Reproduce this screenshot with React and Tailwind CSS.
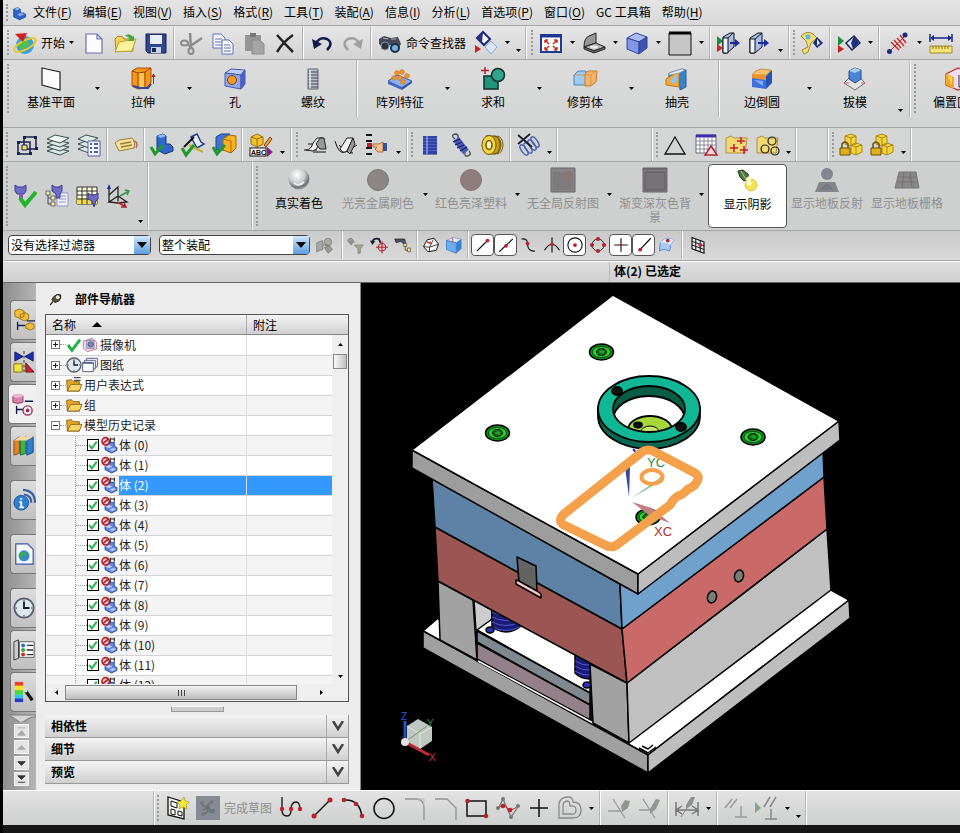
import { useState } from 'react';
import clsx from 'clsx';

const ICONS = {
  part: <><path d="M4 6l6-2 4 2v6l5 0 3 2v4l-9 4-9-4z" fill="#2f62c8" stroke="#123a86" /><path d="M4 6l6-2 4 2-5 2z" fill="#8db7f5" /><path d="M9 14l6-2 6 2-8 3z" fill="#7fa9ee" /></>,
  globe: <><circle cx="12" cy="14" r="9" fill="#3a9fdc" /><path d="M5 13q3-5 8-4 5 1 3 5-4 1-5 5-5 0-6-6z" fill="#4fc04a" /><ellipse cx="12" cy="14" rx="12" ry="4.500" fill="none" stroke="#e8c82a" strokeWidth="2" transform="rotate(-28 12 14)" /><path d="M2 3l12-1-4 9z" fill="#d42020" /></>,
  doc: <path d="M4 3h11l5 5v14H4zM15 3v5h5" fill="#fdfdff" stroke="#6b6fae" strokeWidth="1.200" />,
  open: <><path d="M2 8l3-3 5 1 1 2h9v12H3z" fill="#f2d257" stroke="#a8892a" /><path d="M2 21L6 11l17-3-4 12z" fill="#fdf19a" stroke="#b89a34" /><path d="M12 5q4-4 8 1l1-2v6h-6l2-2q-2-3-5-3z" fill="#3fa83a" /></>,
  save: <><path d="M2 3h20v19H4l-2-2z" fill="#2f4690" stroke="#151f50" /><path d="M6 4h12v9H6z" fill="#e9effa" /><path d="M7 16h10v6H7z" fill="#c9d2e4" /><path d="M8 17h4v4H8z" fill="#1b2450" /></>,
  cut: <g fill="none" stroke="#8c8c8c" strokeWidth="2"><path d="M10 2l1 15M9 16L22 7" strokeWidth="2.500" /><ellipse cx="4.500" cy="12" rx="3.500" ry="2.500" /><ellipse cx="11" cy="20" rx="2.500" ry="3" /><path d="M7 13l4 3" /></g>,
  copy: <g fill="#fbfcff" stroke="#5b6eb8"><path d="M2 3h8l4 4v10H2z" /><path d="M4 8h7M4 11h7M4 14h7" /><path d="M11 9h7l4 4v10H11z" /><path d="M13 14h6M13 17h7M13 20h7" /></g>,
  paste: <><path d="M3 4h16v16H3z" fill="#969696" /><path d="M8 2h6v4H8z" fill="#777" /><path d="M10 9h8l4 4v10H10z" fill="#a5a5a5" stroke="#8a8a8a" /></>,
  del: <path d="M4 4q7 8 16 17M20 4Q10 11 4 21" fill="none" stroke="#222" strokeWidth="2.500" />,
  undo: <><path d="M5 14Q9 5 17 8q7 4 0 11" fill="none" stroke="#121a4c" strokeWidth="2.500" /><path d="M2 8l2 10 8-5z" fill="#121a4c" /></>,
  redo: <><path d="M19 14Q15 5 7 8q-7 4 0 11" fill="none" stroke="#a0a0a0" strokeWidth="2.500" /><path d="M22 8l-2 10-8-5z" fill="#a0a0a0" /></>,
  binoc: <><path d="M1 8l5-3 7 2 7-1 3 7-3 5-8-4-6 3-5-4z" fill="#444a55" /><circle cx="7" cy="15" r="4" fill="#2c3442" stroke="#8792a6" /><circle cx="17" cy="17" r="4" fill="#6db1e8" stroke="#1f2d46" strokeWidth="2" /><path d="M5 7l5 1M13 8l5 0" stroke="#aab" /></>,
  diamonds: <><path d="M9 1l7 7-6 6-7-7z" fill="#fff" stroke="#1a237e" strokeWidth="2" /><path d="M9 1L3 7l5 5z" fill="#26328c" /><path d="M17 10l6 6-6 7-6-7z" fill="#dbe8fb" stroke="#8aa5d8" /><path d="M1 14l6 4-6 4z" fill="#c22" /></>,
  fit: <><path d="M2 4h20v17H2z" fill="#fff" stroke="#1c3a94" strokeWidth="2" /><path d="M2 5h20" stroke="#1c3a94" strokeWidth="3" /><path d="M6 9h3M6 9v3M18 9h-3M18 9v3M6 19h3M6 19v-3M18 19h-3M18 19v-3M6 9l4 4M18 9l-4 4M6 19l4-4M18 19l-4-4" stroke="#c83018" strokeWidth="1.500" /></>,
  shade: <><path d="M2 16q0-9 5-11l7-3v10z" fill="#979797" stroke="#222" /><path d="M2 16l12-4 9 4-11 4z" fill="#b2b2b2" stroke="#222" /><path d="M2 16v2l10 4 11-4v-2l-11 4z" fill="#777" stroke="#222" /><ellipse cx="12" cy="16" rx="4" ry="1.500" fill="#eee" /></>,
  cube: <><path d="M2 7l9-5 11 4-8 5z" fill="#a8bdf4" stroke="#34439a" /><path d="M2 7l12 4v12L2 18z" fill="#7f97e6" stroke="#34439a" /><path d="M14 11l8-5v11l-8 6z" fill="#3c55b4" stroke="#34439a" /></>,
  square: <><path d="M1 2h22v22H1z" fill="#c6c6c6" stroke="#111" /><path d="M1 2h22" stroke="#000" strokeWidth="3" /></>,
  exit: <><path d="M1 5l6 5-6 5z" fill="#1d8c3a" /><path d="M1 13l6 4-6 4z" fill="#c22" /><path d="M7 6l7-4h4v14l-7 6H7z" fill="#a9bdec" stroke="#111" /><path d="M7 7h5v15H7z" fill="#eef3fe" stroke="#111" /><path d="M12 7l5-5" stroke="#111" /><path d="M14 12h6" stroke="#1a2a9c" strokeWidth="2" /><path d="M19 8l5 4-5 4z" fill="#1a2a9c" /></>,
  door: <><path d="M3 7l8-5h4v14l-7 6H3z" fill="#a9bdec" stroke="#111" /><path d="M3 8h5v14H3z" fill="#eef3fe" stroke="#111" /><path d="M8 8l7-6" stroke="#111" /><path d="M11 12h7" stroke="#1a2a9c" strokeWidth="2" /><path d="M17 8l5 4-5 4z" fill="#1a2a9c" /></>,
  wrench: <><path d="M1 5q6-6 12-2l4 4-6 5-3 9-4 2-2-4 6-3-2-6z" fill="#f4dd74" stroke="#a58a2a" /><circle cx="8" cy="6" r="2.500" fill="#59b7d8" /><path d="M17 6l6 6-6 5-4-5z" fill="#1a2a7c" /><path d="M17 8l3 4-3 3z" fill="#dbe6ff" /></>,
  playview: <><path d="M1 5l6 5-6 5z" fill="#1d8c3a" /><path d="M1 14l6 4-6 4z" fill="#c22" /><path d="M17 5l6 7-8 7-6-7z" fill="#dfe8fb" stroke="#1a2a5c" strokeWidth="1.500" /><path d="M17 5l-3 7 2 6 6-6z" fill="#1f3178" /></>,
  measure: <><path d="M4 20L20 4" stroke="#b33" /><path d="M5 11l8 8M8 9l7 8M11 7l7 8M14 4l6 8" stroke="#c22" strokeWidth="1.300" /><circle cx="3.500" cy="20.500" r="2.500" fill="#15288c" /><circle cx="19" cy="4" r="2.500" fill="#15288c" /></>,
  ruler: <><path d="M1 3v8M23 3v8M3 7h18" stroke="#15288c" strokeWidth="1.500" /><path d="M1 7l4-3v6zM23 7l-4-3v6z" fill="#15288c" /><path d="M1 15h22v7H1z" fill="#f5e476" stroke="#a4862a" /><path d="M4 15v3M7 15v3M10 15v3M13 15v3M16 15v3M19 15v3" stroke="#8a6c12" /></>,
  plane: <path d="M3 1l18 4v18L3 18z" fill="#fcfcfc" stroke="#222" strokeWidth="1.200" />,
  extrude: <><path d="M1 4l5-3h14v15l-5 5-8 1-6-3z" fill="#f09a1a" stroke="#b5480a" /><path d="M1 4l6 2v14M7 6l7-1v16M14 5l6-4" fill="none" stroke="#a83c08" /><path d="M8 6h5v14H8z" fill="#fbc658" /><path d="M2 19l7 2 8 0 3-4" fill="none" stroke="#31489a" strokeWidth="2" /><path d="M22.500 17V8M21 10l1.500-3 1.500 3" stroke="#b22" /></>,
  hole: <><path d="M2 6l6-4 14 1-4 5z" fill="#bfd0fa" stroke="#4658b4" /><path d="M2 6l16 2v14L2 19z" fill="#8fa8f2" stroke="#4658b4" /><path d="M18 8l4-5v14l-4 5z" fill="#4a63c4" stroke="#4658b4" /><circle cx="9" cy="13" r="4.500" fill="#f39a20" stroke="#8c3c10" /></>,
  thread: <><path d="M7 2h10v20H7z" fill="#b8bfcc" stroke="#606878" /><path d="M7 5h10M7 8h10M7 11h10M7 14h10M7 17h10M7 20h10" stroke="#3e4654" /><path d="M9 3v18" stroke="#f0f3f8" strokeWidth="2" strokeOpacity=".7" /></>,
  pattern: <><path d="M0 14l9-6 15 6-10 7z" fill="#8db2f2" stroke="#3c5cae" /><path d="M0 14v3l14 6v-3z" fill="#4669c0" /><path d="M14 20v3l10-7v-2z" fill="#3556a8" /><g fill="#f29a2a" stroke="#c8701c" strokeWidth=".7"><circle cx="9" cy="6" r="2.300" /><circle cx="14" cy="5" r="2.300" /><circle cx="19" cy="9" r="2.300" /><circle cx="6" cy="11" r="2.300" /><circle cx="12" cy="11" r="2.300" /><circle cx="15" cy="15" r="2.300" /></g></>,
  unite: <><path d="M3 9h14v13H3z" fill="#23947c" stroke="#0e2c28" strokeWidth="1.500" /><circle cx="17" cy="8" r="6.500" fill="#2fa58c" stroke="#0e2c28" strokeWidth="1.500" /><path d="M4 0v7M0 3.500h8" stroke="#b3202c" strokeWidth="1.500" /></>,
  trim: <><path d="M1 8l4-4h8v14H1z" fill="#9fcaf0" stroke="#4a86b8" /><path d="M12 7l3-3h9l-1 11-5 4h-6z" fill="#f5b468" stroke="#c87a28" /><path d="M1 8h17l5-4M18 8v10" fill="none" stroke="#d09858" /></>,
  shell: <><path d="M4 6l13-4 4 1v17l-6 3-1-12-10 2z" fill="#3b82c4" stroke="#2a5f9c" /><path d="M1 12l13-8v16l-13-2z" fill="#f3a93c" stroke="#b87c20" /><path d="M5 13l7-5v7l-4 2z" fill="#8ec4ee" /><path d="M4 6l13-4 3 1-6 3-10 2z" fill="#e4f0fb" stroke="#8a9cb8" strokeWidth=".7" /></>,
  edge: <><path d="M2 8q3-5 9-6l10 1-4 5z" fill="#f9c070" stroke="#c0731a" strokeWidth=".7" /><path d="M2 8h14v5H2z" fill="#f4922a" /><path d="M2 11l14 2v9L2 20z" fill="#3e6fdc" /><path d="M16 9l6-6v13l-6 6z" fill="#2554b8" /><path d="M4 13l9 1v5z" fill="#86abf6" /></>,
  draft: <><path d="M12 5l10 11-10 7L1 16z" fill="#e5e0e4" stroke="#7a6a70" /><path d="M6 4l6-3 6 2v9l-6 4-6-4z" fill="#4b86d6" stroke="#24508e" /><path d="M6 4l6-3 6 2-6 3z" fill="#a9cdf6" /><path d="M1 16h5M22 16h-4" stroke="#c66" /></>,
  offset: <><path d="M1 7l12-6 10 4v14l-10 4-12-5z" fill="#f0dcf4" stroke="#c03020" strokeWidth="1.200" /><path d="M1 7l8 3v12l-8-4z" fill="#f7a623" /><path d="M3 9l4 1v8z" fill="#fbe14c" /><path d="M14 8v12h8" stroke="#222" fill="#fff" /></>,
  group: <><path d="M9 4h12v12H9z" fill="none" stroke="#18224c" strokeWidth="1.500" /><path d="M3 9h12v12H3z" fill="none" stroke="#18224c" strokeWidth="1.500" /><path d="M7 12h5v5H7z" fill="#f6e35c" stroke="#18224c" /><g fill="#18224c"><path d="M8 3h3v3H8zM19 3h3v3h-3zM2 8h3v3H2zM2 19h3v3H2zM14 19h3v3h-3zM20 14h3v3h-3z" /></g></>,
  layers: <g fill="#dfe7e6" stroke="#31504e"><path d="M1 18l8-3 14 3-9 4z" /><path d="M1 14l8-3 14 3-9 4z" /><path d="M1 10l8-3 14 3-9 4z" /><path d="M1 6l8-4 14 3-9 5z" fill="#f4f8f7" /></g>,
  layerlist: <><g fill="#dfe7e6" stroke="#31504e"><path d="M1 16l8-3 12 3-9 4z" /><path d="M1 11l8-3 12 3-9 4z" /><path d="M1 6l8-4 12 3-9 5z" /></g><path d="M11 8h12v15H11z" fill="#f4f6ff" stroke="#4e5fae" /><path d="M13 11h2M17 11h4M13 15h2M17 15h4M13 19h2M17 19h4" stroke="#4e5fae" strokeWidth="2" /></>,
  tag: <><path d="M1 10l4-3 13-2 3 4-1 6-15 3z" fill="#f3e09c" stroke="#a07c34" /><path d="M6 11l11-2M7 14l11-2" stroke="#a07c34" strokeWidth="1.500" /><path d="M19 8q6 0 3 7" fill="none" stroke="#a55" strokeWidth="1.200" /></>,
  partcheck: <><path d="M7 3l6-2 3 2v8l4 0 3 3v4l-8 3-8-4z" fill="#2e66c9" stroke="#163c80" /><path d="M7 3l6-2 3 2-5 2z" fill="#8fb8f6" /><path d="M1 14l4 7 8-9" fill="none" stroke="#219a2a" strokeWidth="3" /></>,
  pencheck: <><path d="M10 4l6-3 4 8 3 2-7 4z" fill="#e9efff" stroke="#243a84" strokeWidth="1.500" /><path d="M3 14L13 4" stroke="#111" strokeWidth="2" /><path d="M8 12l14 7" stroke="#c4b02a" strokeWidth="2" /><path d="M1 15l4 7 8-10" fill="none" stroke="#219a2a" strokeWidth="3" /></>,
  boxcheck: <><path d="M4 4l5-3h9l-5 4v12H4z" fill="#3e74d0" stroke="#1d448c" /><path d="M11 6l6-4 7 1v12l-5 5-8-3z" fill="#f8b41c" stroke="#a8660c" /><path d="M11 6l8 2v12" fill="none" stroke="#a8660c" /><path d="M1 14l4 7 8-9" fill="none" stroke="#219a2a" strokeWidth="3" /></>,
  abc: <><path d="M2 4l6-3 6 3v7l-6 3-6-3z" fill="#f5c22a" stroke="#9a7010" /><path d="M2 4l6 2 6-2M8 6v8" stroke="#9a7010" fill="none" /><path d="M15 12l6-8 2 2-6 8z" fill="#f3a12a" stroke="#8a3a0a" /><rect x="1" y="15" width="16" height="8" fill="#fff" stroke="#111" /><text x="2" y="22" fontSize="7" fontWeight="bold" fontFamily="Liberation Sans, sans-serif">ABC</text><path d="M18 14l6 5-6 5z" fill="#8e1f8c" /></>,
  surf1: <><path d="M1 17h13M10 19h13M5 11h8" stroke="#111" /><path d="M3 17q5 0 7-7l4-5h6l-4 6q-2 6-6 7z" fill="#eee" stroke="#222" /><path d="M13 11l4-6h4l2 11h-6z" fill="#999" stroke="#222" /></>,
  surf2: <><path d="M1 8q4 14 10 11T23 12M5 12q6 8 14 8" fill="none" stroke="#111" /><path d="M6 16l7-11 6 0-6 13q-4 3-7-2z" fill="#f4f4f4" stroke="#222" /><path d="M13 18l6-13 2 6-5 10z" fill="#999" stroke="#222" /></>,
  hand: <><path d="M1 2h6M1 8h6M1 15h6M1 21h6" stroke="#111" strokeWidth="2" /><path d="M2 10h5v4H2z" fill="#b8202c" /><path d="M8 11h6l4-2v10h-5l-3-3 2-2H8z" fill="#f4c391" stroke="#a86a3c" /><path d="M18 10h4v8h-4z" fill="#3c50a0" /></>,
  coil: <><path d="M5 3h14v18H5z" fill="#4a5ed0" /><g stroke="#1b2670" strokeWidth="1.200"><path d="M5 4h14M5 7h14M5 10h14M5 13h14M5 16h14M5 19h14M5 21h14" /></g><path d="M9 3v18" stroke="#9fb0f4" strokeWidth="1.500" strokeOpacity=".8" /></>,
  ext: <g fill="none"><path d="M6 6q-5-4 0-5 4 0 3 4M16 19q-1 5 3 4 4-2 1-5" stroke="#4a4a5a" strokeWidth="1.300" /><path d="M7 6l10 13" stroke="#4a5cbe" strokeWidth="7" /><path d="M4 9l7-3M6 12l7-3M8 15l7-3M11 18l7-4" stroke="#141d5c" strokeWidth="1.200" /></g>,
  disc: <><path d="M6 3h9a6 9 0 0 1 0 18H8z" fill="#c89a12" stroke="#6e540a" /><path d="M14 3a6 9 0 0 1 0 18M17 3a6 9 0 0 1 0 18" fill="none" stroke="#6e540a" /><ellipse cx="9" cy="12" rx="7" ry="9.500" fill="#f3d43a" stroke="#6e540a" /><ellipse cx="9" cy="12" rx="3" ry="4.500" fill="#fbf3c0" stroke="#6e540a" strokeWidth="1.500" /></>,
  coilx: <><g fill="none" stroke="#4a62b8" strokeWidth="1.500"><ellipse cx="8" cy="17" rx="2.500" ry="6" transform="rotate(-35 8 17)" /><ellipse cx="12" cy="15" rx="2.500" ry="6" transform="rotate(-35 12 15)" /><ellipse cx="16" cy="12" rx="2.500" ry="6" transform="rotate(-35 16 12)" /><ellipse cx="19" cy="9" rx="2.500" ry="6" transform="rotate(-35 19 9)" /></g><path d="M2 2l14 12M2 11L14 1" stroke="#1c2030" strokeWidth="1.800" /></>,
  tri: <path d="M12 4l10 17H2z" fill="none" stroke="#111" strokeWidth="1.300" />,
  gridtri: <><path d="M2 2h20v18H2z" fill="#fff" stroke="#667" /><path d="M2 3h20" stroke="#3c2fb0" strokeWidth="3" /><path d="M2 8h20M2 12h20M2 16h20M6 4v16M10 4v16M14 4v16M18 4v16" stroke="#889" /><path d="M17 13l6 9H11z" fill="#f6d8da" stroke="#b3202c" strokeWidth="1.500" /></>,
  folderplus: <><path d="M1 5l5-2 3 2h13l-2 15H1z" fill="#f3d876" stroke="#b0903a" /><path d="M16 4v7M12 8h8M9 11v8M5 15h8M19 13v8M15 17h8" stroke="#c0202c" strokeWidth="1.500" /></>,
  foldero: <><path d="M1 5l5-2 3 2h13l-2 15H1z" fill="#f3d876" stroke="#b0903a" /><g fill="none" stroke="#222" strokeWidth="1.200"><circle cx="16" cy="8" r="4" /><circle cx="9" cy="16" r="4" /><circle cx="19" cy="18" r="4" /></g></>,
  lock: <><path d="M6 3l6-2 5 2v8l-6 2-5-2zM12 12l5-2 6 2v7l-6 3-5-2z" fill="#f6d33a" stroke="#a8881c" /><path d="M6 3l6 2 5-2M12 12l5 2 6-2M12 5v7M17 14v8" fill="none" stroke="#a8881c" /><path d="M1 15h10v7H1z" fill="#e0b01c" stroke="#6c4e06" /><path d="M3 15v-4q3-4 6 0v4" fill="none" stroke="#6c4e06" strokeWidth="1.500" /></>,
  plugcheck: <><path d="M1 1l3 2h5l3-2v6l-2 3H3L1 7z" fill="#6e6cc4" stroke="#403c8c" /><path d="M5 10h4v6H5z" fill="#8a58b0" /><path d="M6 14l5 7L22 8" fill="none" stroke="#22b52c" strokeWidth="4" /></>,
  plugtree: <><path d="M1 7h4v4H1zM6 12h4v4H6zM6 18h4v4H6z" fill="#f6ec8c" stroke="#667" /><path d="M3 11v9h3M3 14h3" fill="none" stroke="#445" /><path d="M12 9h11v13H12z" fill="#eef0fc" stroke="#8d95c8" /><path d="M14 12h7M14 15h7M14 18h7" stroke="#8d95c8" /><path d="M7 1l3 2h4l3-2v6l-2 3v4h-4v-4l-4-3z" fill="#6e6cc4" stroke="#403c8c" /></>,
  plugtable: <><path d="M1 3h20v17H1z" fill="#fffbe2" stroke="#333" /><path d="M1 14h20v6H1z" fill="#f4dc4c" /><path d="M1 7h20M1 11h20M1 15h20M6 3v17M11 3v17M16 3v17" stroke="#333" /><path d="M12 9l3 2h4l3-2v6l-2 2-2 6-2-6-4-2z" fill="#6e6cc4" stroke="#403c8c" /></>,
  axes: <><path d="M2 3v15M2 11l9-8v14M2 18l9-6 9 6-9 1-9-1z" fill="none" stroke="#222" strokeWidth="1.300" /><path d="M0 5l2-5 2 5z" fill="#1a2ab0" /><path d="M13 12l9-5M18 6l4 1-2 4" stroke="#2a9a4a" fill="none" strokeWidth="1.500" /><path d="M10 18l9 5M14 23l5 0-2-4" stroke="#b3202c" fill="none" strokeWidth="1.500" /></>,
  sphere: <><defs><radialGradient id="chrome" cx=".4" cy=".3" r=".75"><stop offset="0" stopColor="#fff" /><stop offset=".5" stopColor="#c9cdce" /><stop offset=".8" stopColor="#6d7375" /><stop offset="1" stopColor="#aeb4b4" /></radialGradient></defs><circle cx="12" cy="11" r="10.500" fill="url(#chrome)" /><path d="M7 15q5 4 10-1" stroke="#eee" fill="none" strokeWidth="2" /></>,
  ball: <circle cx="12" cy="12" r="10.500" fill="#8b8585" stroke="#777" />,
  ball2: <circle cx="12" cy="12" r="10.500" fill="#8f7d7e" stroke="#857676" />,
  env: <><path d="M0 0h24v24H0z" fill="#888485" stroke="#666" /><path d="M2 4h20v18H2z" fill="#7d7b7c" /><circle cx="17" cy="8" r="5" fill="#8b7577" /></>,
  gradbg: <><path d="M0 0h24v24H0z" fill="#807c7f" stroke="#666" /><path d="M0 1h24M2 4h20v18H2z" fill="#767377" stroke="#5f5b60" /></>,
  lamp: <><path d="M2 2l5-1 5 4 1 5-5 2-4-4z" fill="#4e7a42" stroke="#1c3418" /><path d="M5 2l4 7" stroke="#a8cc9c" /><circle cx="15" cy="16" r="6" fill="#f5e254" stroke="#d8c65c" /><circle cx="13" cy="14" r="2.500" fill="#fffbd0" /><path d="M9 10l4-3 3 3-4 3z" fill="#fdf8b8" /></>,
  reflect: <><circle cx="12" cy="6" r="6" fill="#80858f" /><path d="M4 14h16l4 10H0z" fill="#858589" /><path d="M7 22a5 5 0 0 1 10 0" fill="#747c8c" stroke="#666d7c" /></>,
  floor: <><path d="M4 4h17l3 16H0z" fill="#8a8789" stroke="#777" /><path d="M3 9h19M2 14h21M9 4L7 20M15 4l2 16" stroke="#737073" /></>,
  ghost: <><path d="M1 9l8-3v12l-8 3z" fill="#a6a8a4" stroke="#777" /><circle cx="16" cy="8" r="5" fill="#a8aaa4" stroke="#7d7d78" /><path d="M11 15l7-2 4 5-6 5z" fill="#989a94" stroke="#777" /><path d="M9 12h7" stroke="#666" /></>,
  filterx: <><path d="M2 6q4-6 8 0l-3 6z" fill="#9a9c98" stroke="#777" /><path d="M4 8h8M11 12h12l-4 5v6h-3v-6z" fill="#a3a592" stroke="#7e8070" /></>,
  snapback: <><path d="M3 9q1-7 9-5l2 5" fill="none" stroke="#1a2030" strokeWidth="2.500" /><path d="M0 6l7 1-4 5z" fill="#1a2030" /><circle cx="16" cy="15" r="5" fill="none" stroke="#b3202c" strokeWidth="1.500" /><path d="M16 7v16M8 15h16" stroke="#c0202c" strokeWidth="1.500" /></>,
  snaptree: <><path d="M1 4h13l2 6h-4L9 7 3 9z" fill="#4c5268" stroke="#222" /><path d="M13 10h4v4h-4zM18 16h4v5h-4z" fill="#f4e46c" stroke="#555" /><path d="M15 14v5h3" stroke="#333" fill="none" /></>,
  solid: <><path d="M2 14l5-9 9-2 6 8-3 8-11 2z" fill="#fafafa" stroke="#111" strokeWidth="1.300" /><path d="M2 14l8 1 5-10M10 15v6M10 15l12-4" fill="none" stroke="#111" /><path d="M7 8l6 2" stroke="#c22" strokeWidth="2" /></>,
  bluecube: <><path d="M2 6l8-4 12 2-7 5z" fill="#d8ecff" stroke="#8a94c8" /><path d="M2 6l13 3v14L2 18z" fill="#69aef0" stroke="#3a6fc4" /><path d="M15 9l7-5v13l-7 6z" fill="#3a7fd4" /><path d="M10 2v7" stroke="#c44" /></>,
  endpt: <><path d="M4 20L19 5" stroke="#111" strokeWidth="1.500" /><circle cx="18" cy="6" r="2.500" fill="#b8202c" /></>,
  midpt: <><path d="M3 21L21 4" stroke="#111" strokeWidth="1.500" /><circle cx="12" cy="13" r="2.500" fill="#b8202c" /></>,
  curve: <><path d="M2 4q8-1 8 6 0 11 10 10" fill="none" stroke="#111" strokeWidth="1.500" /><circle cx="10" cy="10" r="2.500" fill="#b8202c" /></>,
  cross: <><path d="M2 19Q12 3 22 19M12 2v20" fill="none" stroke="#111" strokeWidth="1.500" /><circle cx="12" cy="11" r="2.500" fill="#b8202c" /></>,
  center: <><circle cx="12" cy="12" r="9.500" fill="none" stroke="#111" strokeWidth="1.500" /><circle cx="12" cy="12" r="2.500" fill="#b8202c" /></>,
  quad: <><circle cx="12" cy="12" r="8" fill="none" stroke="#222" strokeWidth="1.300" /><g fill="#b8202c"><circle cx="12" cy="4" r="2.800" /><circle cx="20" cy="12" r="2.800" /><circle cx="12" cy="20" r="2.800" /><circle cx="4" cy="12" r="2.800" /></g></>,
  exist: <><path d="M12 3v18M3 12h18" stroke="#111" strokeWidth="1.500" /><circle cx="12" cy="12" r="1.500" fill="#c22" /></>,
  oncurve: <><path d="M5 20L21 3" stroke="#111" strokeWidth="1.500" /><circle cx="7" cy="18" r="2.500" fill="#b8202c" /></>,
  onface: <><path d="M3 9q7-9 18-4l-5 7q2 4-1 8-8-4-13 0z" fill="#a9cbf3" stroke="#4a74c0" /><path d="M3 9q7-9 18-4l-5 7q-6-5-13-3z" fill="#e3f0ff" /><circle cx="13" cy="6" r="2.500" fill="#b8202c" /></>,
  gridpt: <><path d="M4 2l16 6v15L4 17z" fill="#e6e6e6" stroke="#111" strokeWidth="1.500" /><path d="M4 7l16 6M4 12l16 6M9 4v15M15 6v15" stroke="#111" strokeWidth="1.300" /><circle cx="15" cy="12" r="2.500" fill="#c8203c" /></>,
  sketch: <><path d="M3 1l16 5v17L3 19z" fill="#f3f3ee" stroke="#111" strokeWidth="1.300" /><path d="M6 5l6 2v5l-6-2zM6 13l4 1v5l-4-1zM13 15l4 1v4l-4-1z" fill="#fff" stroke="#111" /><path d="M19 1l1 4 4 1-3 3 1 4-4-2-4 2 1-4-3-3 4-1z" fill="#f8ea3c" stroke="#a89a1c" strokeWidth=".7" /></>,
  finish: <><path d="M0 0h24v24H0z" fill="#858b90" /><path d="M5 8l5 3 5-5M6 14l6-2 5 4M8 19l4-4 5 2" stroke="#6b7178" fill="none" strokeWidth="1.500" /><circle cx="6" cy="7" r="2" fill="#747a80" /><circle cx="16" cy="6" r="2" fill="#747a80" /><circle cx="12" cy="12" r="2" fill="#6b7178" /><circle cx="7" cy="18" r="2" fill="#747a80" /><circle cx="17" cy="15" r="2" fill="#6b7178" /></>,
  profile: <><path d="M3 1v13q0 6 5 6 4 0 4-6 0-8 5-8 4 0 4 8" fill="none" stroke="#111" strokeWidth="1.300" /><g fill="#c0202c"><circle cx="3" cy="13" r="2.200" /><circle cx="12" cy="13" r="2.200" /><circle cx="21" cy="13" r="2.200" /></g></>,
  line: <><path d="M4 20L20 4" stroke="#111" strokeWidth="1.500" /><circle cx="4" cy="20" r="2.500" fill="#b8202c" /><circle cx="20" cy="4" r="2.500" fill="#b8202c" /></>,
  arc: <><path d="M3 4q16-1 18 17" fill="none" stroke="#111" strokeWidth="1.500" /><g fill="#b8202c"><circle cx="3" cy="4" r="2.300" /><circle cx="15" cy="8" r="2.300" /><circle cx="21" cy="20" r="2.300" /></g></>,
  circle: <circle cx="12" cy="12.500" r="10" fill="none" stroke="#111" strokeWidth="1.500" />,
  fillet: <><path d="M2 3h12q7 1 7 9v12" fill="none" stroke="#929292" strokeWidth="1.300" /><path d="M14 3h7v8" fill="none" stroke="#bbb" /></>,
  chamfer: <path d="M1 3h12l9 9v12" fill="none" stroke="#929292" strokeWidth="1.300" />,
  rect: <><path d="M2 5h19v15H2z" fill="none" stroke="#111" strokeWidth="1.500" /><circle cx="2.500" cy="5" r="2.300" fill="#b8202c" /><circle cx="21" cy="20" r="2.300" fill="#b8202c" /></>,
  spline: <><path d="M2 13l5-10 8 18 7-10" fill="none" stroke="#777" strokeWidth="1.300" /><path d="M2 12q5-4 9 0t11-2" fill="none" stroke="#a33" /><g fill="#777"><circle cx="7" cy="3" r="2" /><circle cx="15" cy="21" r="2" /><circle cx="22" cy="10" r="2" /><circle cx="2" cy="12" r="2" /></g><circle cx="7" cy="10" r="2.300" fill="#c0202c" /><circle cx="14" cy="14" r="2.300" fill="#c0202c" /></>,
  point: <path d="M12 3v18M3 12h18" stroke="#111" strokeWidth="1.500" />,
  offcurve: <g fill="none" stroke="#8a8a8a" strokeWidth="1.300"><path d="M1 22V8q1-7 9-7 5 0 5 5 8 0 8 8 0 8-8 8z" /><path d="M5 18v-8q0-5 5-5 2 1 2 5 6-1 6 4t-5 4z" /></g>,
  qtrim: <><path d="M1 15h13M6 3l12 19" stroke="#999" strokeWidth="1.300" /><path d="M14 10l4-6 5 1-2 7-6 4z" fill="#92968e" /></>,
  qext: <><path d="M1 14h11M5 3l12 19" stroke="#999" strokeWidth="1.300" /><path d="M12 13l6-10 4 1-4 9-6 5z" fill="#92968e" /></>,
  dim: <><path d="M1 6v14M23 6v14M1 14h22M7 10l-6 4 6 4M17 10l6 4-6 4" fill="none" stroke="#777" strokeWidth="1.500" /><path d="M6 21l8-12" stroke="#888" /><path d="M11 9l5-8h4l-3 8-6 4z" fill="#8e928c" /></>,
  constr: <g fill="none" stroke="#999" strokeWidth="1.500"><path d="M1 12l7-9M6 12l7-9M11 21h12M17 21V10" /></g>,
  autoc: <><path d="M0 6l6 6-6 5z" fill="#8aa08a" /><g fill="none" stroke="#888" strokeWidth="1.500"><path d="M9 11l6-10M15 11l6-10M10 23h12M16 23V13" /></g></>,
  asm: <><path d="M2 2l5-2 5 2v6l-5 2-5-2zM8 6l5-2 4 2v5l-4 2-5-2zM14 17l5-2 4 2v4l-4 2-5-2z" fill="#f3bd3c" stroke="#9a6c10" /><path d="M5 14v9M5 18h8M15 13h9" stroke="#18224c" strokeWidth="1.500" /></>,
  mate: <><path d="M2 1v10l9-5zM22 1v10l-9-5z" fill="#1d2fb0" stroke="#111a60" /><path d="M12 0v24" stroke="#222" strokeDasharray="3 2" /><path d="M1 14h9v9H1z" fill="#f6e33c" stroke="#776a10" /><path d="M14 23V13l9 10z" fill="#c8202c" stroke="#701018" /></>,
  nav: <><path d="M1 3q5-3 11 0v7q-6 3-11 0z" fill="#d884a8" stroke="#8c3c64" /><ellipse cx="6.500" cy="3" rx="5.500" ry="2" fill="#f4b8d0" /><path d="M14 9h9M5 14v9M5 18h7" stroke="#111a4c" strokeWidth="1.500" /><circle cx="17" cy="19" r="5" fill="none" stroke="#a0305c" strokeWidth="1.500" /><circle cx="17" cy="19" r="2" fill="#a0305c" /></>,
  books: <><path d="M1 6l6-4v18l-6 2z" fill="#e08428" stroke="#8a4410" /><path d="M8 6l6-4v18l-6 2z" fill="#3cb44c" stroke="#1a6e28" /><path d="M15 6l7-4v17l-7 3z" fill="#2f7fd0" stroke="#154a8c" /><path d="M1 6l6-4h15l-7 4z" fill="#f3d8a4" /></>,
  info: <><circle cx="9" cy="15" r="8" fill="#2c7fd4" stroke="#1450a0" /><path d="M9 10v2M9 14v6M7 14h2M7 20h5" stroke="#fff" strokeWidth="2" /><path d="M12 6q8 1 8 9M11 1q13 1 13 14" fill="none" stroke="#3a5ca4" strokeWidth="2.300" /></>,
  web: <><path d="M3 1h13l6 6v16H3z" fill="#f6f9ff" stroke="#3a58a8" strokeWidth="1.300" /><circle cx="12" cy="14" r="6" fill="#3a88d0" /><path d="M8 11q4-3 6 0t-3 3 1 5q-5-1-5-5z" fill="#3cae48" /></>,
  clock: <><circle cx="12" cy="12" r="10.500" fill="#dfe7ee" stroke="#56606c" strokeWidth="2" /><path d="M12 5v7h6" fill="none" stroke="#111c34" strokeWidth="2" /><path d="M12 3v1M12 20v1M3 12h1M20 12h1" stroke="#333" strokeWidth="1.500" /></>,
  roles: <><path d="M1 3l5-2v20l-5 2z" fill="#ccc" stroke="#333" /><path d="M7 3h16v17H7z" fill="#fff" stroke="#555" /><circle cx="11" cy="7" r="2.200" fill="#2f6fd0" /><circle cx="11" cy="12" r="2.200" fill="#2fae3c" /><circle cx="11" cy="17" r="2.200" fill="#c8302c" /><path d="M15 7h7M15 12h7M15 17h7" stroke="#333" strokeWidth="1.500" /></>,
  spectrum: <><path d="M2 1h9v5H2z" fill="#e8402c" /><path d="M2 5h9v5H2z" fill="#f6e02c" /><path d="M2 10h9v5H2z" fill="#48d83c" /><path d="M2 15h9v4H2z" fill="#28c8e8" /><path d="M2 19h9v4H2z" fill="#2838d0" /><path d="M14 11l7 10" stroke="#111" strokeWidth="3.500" /><path d="M11 7l4 5" stroke="#ddd" strokeWidth="2.500" /></>,
  camera: <><path d="M2 6l14-4 6 6v10l-14 4-6-5z" fill="#f4d8e4" stroke="#a8506c" /><path d="M7 5h11v12H7z" fill="#cbd2ea" stroke="#5a5f8c" /><circle cx="13" cy="11" r="4" fill="#7888b8" stroke="#333c68" /></>,
  tick: <path d="M3 12l6 8L21 4" fill="none" stroke="#24b14c" strokeWidth="4.500" />,
  sheets: <g fill="#fff" stroke="#5c648c" strokeWidth="1.500"><path d="M7 2h16v13H7z" /><path d="M4 5h16v13H4z" /><path d="M1 8h16v14H1z" /><path d="M1 9h16" strokeWidth="2.500" /></g>,
  folder: <><path d="M1 5l7-1 3 3h9v14H2z" fill="#e8a828" stroke="#7e5a14" strokeWidth="1.300" /><path d="M2 21l5-10h17l-4 10z" fill="#fbd664" stroke="#7e5a14" strokeWidth="1.300" /></>,
  exprfolder: <><path d="M1 5l7-1 3 3h9v14H2z" fill="#e8a828" stroke="#7e5a14" strokeWidth="1.300" /><path d="M2 21l5-10h17l-4 10z" fill="#fbd664" stroke="#7e5a14" strokeWidth="1.300" /><path d="M12 1h10M12 5h10" stroke="#223" strokeWidth="1.500" /></>,
  body: <><path d="M6 14l6-3 2-3h6v6l4 2v4l-8 4-10-5z" fill="#5f86de" stroke="#20388c" strokeWidth="1.200" /><path d="M6 14l6-2 5 2-5 3zM13 19l5-2 5 1-6 3z" fill="#c4d4fb" /><circle cx="7" cy="6.500" r="5.500" fill="#f8dcd8" stroke="#b8202c" strokeWidth="2.500" /><path d="M3 10l8-7" stroke="#b8202c" strokeWidth="2.500" /><path d="M14 1v7M20 1v6M14 3h6" stroke="#222" strokeWidth="1.500" /></>,
  pin: <><path d="M8 8q6-6 12-3 2 6-4 11l-6 2-5-5z" fill="#555530" stroke="#111" strokeWidth="1.500" /><circle cx="15" cy="9" r="4" fill="#f4f4dc" stroke="#222" /><path d="M7 16l-5 6" stroke="#111" strokeWidth="2" /></>,
};

function Icon({ name, className = 'w-6 h-6' }) {
  return <svg viewBox="0 0 24 24" className={clsx('shrink-0 overflow-visible', className)} aria-hidden="true">{ICONS[name]}</svg>;
}

function Caret({ className }) {
  return (
    <svg viewBox="0 0 5 3" className={clsx('w-[5px] h-[3px] shrink-0', className)} aria-hidden="true">
      <path d="M0 0h5L2.500 3z" fill="currentColor" />
    </svg>
  );
}

function Tool({ name, wide = 'w-[31px]' }) {
  return (
    <button className={clsx('h-8 shrink-0 flex items-center justify-center', wide)} aria-label={name}>
      <Icon name={name} />
    </button>
  );
}

const Drop = ({ w = 'w-3' }) => (
  <button className={clsx('h-8 shrink-0 flex items-center justify-center', w)} aria-label="More"><Caret /></button>
);
const LowDrop = ({ w = 'w-3' }) => (
  <button className={clsx('self-stretch shrink-0 flex items-end justify-center pb-[7px]', w)} aria-label="Toolbar options"><Caret /></button>
);
const Sep = ({ w = 'w-[6px]' }) => (
  <div className={clsx('self-stretch shrink-0 flex justify-center', w)}>
    <div className="w-[2px] border-l border-[#b4b4b4] bg-white" />
  </div>
);
const Grip = ({ w = 'w-[5px]' }) => (
  <div className={clsx('self-stretch shrink-0 flex justify-center py-1', w)}>
    <div className="border-l-2 border-dotted border-[#999]" />
  </div>
);
const Space = ({ w }) => <div className={clsx('shrink-0', w)} />;

const BAR = 'flex shrink-0 items-center overflow-hidden border-b border-[#a6a6a6]';

const MENUS = [
  ['文件', 'F'], ['编辑', 'E'], ['视图', 'V'], ['插入', 'S'], ['格式', 'R'], ['工具', 'T'], ['装配', 'A'],
  ['信息', 'I'], ['分析', 'L'], ['首选项', 'P'], ['窗口', 'O'], ['GC 工具箱', ''], ['帮助', 'H'],
];

function MenuBar() {
  return (
    <nav className={clsx(BAR, 'h-[26px] bg-linear-to-b from-[#e3e3e3] to-[#d9d9d9]')}>
      <Grip w="w-[8px]" />
      <Icon name="part" className="w-4 h-4" />
      <div className="flex gap-[11px] pl-[6px] pb-[2px]">
        {MENUS.map(([label, key]) => (
          <button key={label} className="shrink-0 whitespace-nowrap">
            {label}{key && <>(<u className="underline-offset-2">{key}</u>)</>}
          </button>
        ))}
      </div>
    </nav>
  );
}

function StandardBar() {
  return (
    <div className={clsx(BAR, 'h-[34px] bg-linear-to-b from-[#e6e6e6] to-[#d3d3d3]')}>
      <Grip w="w-[10px]" />
      <button className="w-[65px] shrink-0 flex items-center gap-1"><Icon name="globe" />开始<Caret /></button>
      <Tool name="doc" /><Tool name="open" /><Tool name="save" />
      <Sep w="w-[5px]" />
      <Tool name="cut" /><Tool name="copy" /><Tool name="paste" /><Tool name="del" />
      <Sep />
      <Tool name="undo" /><Tool name="redo" />
      <Sep />
      <button className="w-24 shrink-0 flex items-center gap-1 pl-1 whitespace-nowrap"><Icon name="binoc" />命令查找器</button>
      <Tool name="diamonds" /><Drop /><LowDrop w="w-[10px]" />
      <Sep /><Grip w="w-[6px]" />
      <Tool name="fit" /><Drop />
      <Tool name="shade" /><Drop />
      <Tool name="cube" /><Drop />
      <Tool name="square" /><Drop />
      <Sep w="w-[5px]" />
      <Tool name="exit" /><Tool name="door" /><LowDrop />
      <Sep w="w-[5px]" /><Grip />
      <Tool name="wrench" />
      <Sep />
      <Tool name="playview" /><Drop />
      <Sep />
      <Tool name="measure" /><Drop /><Tool name="ruler" />
    </div>
  );
}

function Feature({ icon, label, w = 'w-[76px]' }) {
  return (
    <button className={clsx('shrink-0 flex flex-col items-center gap-[2px] whitespace-nowrap leading-[18px]', w)}>
      <Icon name={icon} />
      {label}
    </button>
  );
}

function FeatureBar() {
  return (
    <div className={clsx(BAR, 'h-[68px] pb-[10px] bg-linear-to-b from-[#dcdcdc] to-[#d2d5d3]')}>
      <Grip w="w-[10px]" />
      <Feature icon="plane" label="基准平面" /><Drop w="w-4" />
      <Feature icon="extrude" label="拉伸" /><Drop w="w-4" />
      <Feature icon="hole" label="孔" />
      <Feature icon="thread" label="螺纹" w="w-20" />
      <Sep w="w-2" />
      <Feature icon="pattern" label="阵列特征" w="w-[78px]" /><Drop w="w-4" />
      <Feature icon="unite" label="求和" /><Drop w="w-4" />
      <Feature icon="trim" label="修剪体" /><Drop w="w-4" />
      <Feature icon="shell" label="抽壳" />
      <Sep w="w-2" />
      <Feature icon="edge" label="边倒圆" w="w-[78px]" /><Drop w="w-4" />
      <Feature icon="draft" label="拔模" />
      <button className="self-end w-[14px] h-2 shrink-0 flex justify-center" aria-label="Toolbar options"><Caret /></button>
      <Sep w="w-[5px]" /><Grip />
      <Feature icon="offset" label="偏置区域" w="w-20" />
    </div>
  );
}

function UtilityBar() {
  return (
    <div className={clsx(BAR, 'h-[34px] bg-[#d3d6d4]')}>
      <Grip w="w-[8px]" />
      <Tool name="group" /><Tool name="layers" /><Tool name="layerlist" />
      <Sep />
      <Tool name="tag" />
      <Sep w="w-[5px]" />
      <Tool name="partcheck" /><Tool name="pencheck" /><Tool name="boxcheck" />
      <Sep />
      <Tool name="abc" /><LowDrop />
      <Sep /><Grip />
      <Tool name="surf1" /><Tool name="surf2" /><Tool name="hand" /><LowDrop />
      <Sep w="w-[5px]" /><Grip />
      <Tool name="coil" /><Tool name="ext" /><Tool name="disc" />
      <Sep w="w-[5px]" />
      <Tool name="coilx" /><LowDrop />
      <Sep w="w-1" />
      <Space w="w-[91px]" />
      <Sep w="w-1" /><Grip />
      <Tool name="tri" /><Tool name="gridtri" /><Tool name="folderplus" /><Tool name="foldero" /><LowDrop w="w-[10px]" />
      <Sep w="w-[5px]" />
      <Space w="w-7" />
      <Sep w="w-1" /><Grip />
      <Tool name="lock" /><Tool name="lock" /><LowDrop />
      <Sep w="w-1" />
    </div>
  );
}

function Render({ icon, label, w = 'w-[78px]', off = true }) {
  return (
    <button
      disabled={off}
      className={clsx('h-full shrink-0 flex flex-col items-center gap-1 pt-[6px] leading-[14px] disabled:text-[#8d8f8e]', w)}
    >
      <Icon name={icon} />
      {label}
    </button>
  );
}

const RenderDrop = () => (
  <button className="self-start w-[14px] h-16 shrink-0 flex items-center justify-center" aria-label="More"><Caret /></button>
);

function RenderBar() {
  return (
    <div className={clsx(BAR, 'h-[69px] bg-[#cdd0ce] border-[#8f8f8f]')}>
      <Grip w="w-[7px]" />
      <Tool name="plugcheck" /><Tool name="plugtree" /><Tool name="plugtable" /><Tool name="axes" />
      <LowDrop />
      <Sep w="w-1" />
      <Space w="w-[100px]" />
      <Sep w="w-1" /><Grip w="w-[6px]" />
      <Render icon="sphere" label="真实着色" off={false} />
      <Render icon="ball" label="光亮金属刷色" w="w-20" /><RenderDrop />
      <Render icon="ball2" label="红色亮泽塑料" /><RenderDrop />
      <Render icon="env" label="无全局反射图" /><RenderDrop />
      <Render icon="gradbg" label="渐变深灰色背景" /><RenderDrop />
      <button className="w-[79px] h-16 shrink-0 flex flex-col items-center gap-1 pt-1 leading-[14px] rounded-sm border border-[#555] bg-white" aria-pressed="true">
        <Icon name="lamp" />显示阴影
      </button>
      <Render icon="reflect" label="显示地板反射" w="w-20" />
      <Render icon="floor" label="显示地板栅格" w="w-20" />
    </div>
  );
}

function Combo({ label, value, w }) {
  return (
    <div className={clsx('relative shrink-0 flex', w)}>
      <select aria-label={label} className="w-full h-5 pl-[2px] pb-[1px] appearance-none rounded-sm border border-[#444] bg-white leading-[18px]">
        <option>{value}</option>
      </select>
      <span className="absolute right-[1px] top-[1px] w-4 h-[18px] flex items-center justify-center bg-linear-to-b from-[#cfe6fa] to-[#5b9fe0] pointer-events-none">
        <svg viewBox="0 0 10 6" className="w-[10px] h-[6px]"><path d="M0 0h10L5 6z" /></svg>
      </span>
    </div>
  );
}

function Snap({ name, w = 'w-[23px]', on }) {
  return (
    <button
      aria-label={name}
      aria-pressed={!!on}
      className={clsx('h-[22px] shrink-0 flex items-center justify-center', w, on && 'rounded-sm border border-[#555] bg-white')}
    >
      <Icon name={name} className="w-[18px] h-[18px]" />
    </button>
  );
}

function SelectionBar() {
  return (
    <div className={clsx(BAR, 'h-[30px] pl-[5px] pb-[1px] bg-linear-to-b from-[#c9c9c9] to-[#dadada]')}>
      <Combo label="选择过滤器" value="没有选择过滤器" w="w-[143px]" />
      <Space w="w-2" />
      <Combo label="选择范围" value="整个装配" w="w-[151px]" />
      <Snap name="ghost" w="w-[30px]" />
      <Sep w="w-[3px]" />
      <Snap name="filterx" w="w-6" /><Snap name="snapback" w="w-6" /><Snap name="snaptree" w="w-6" />
      <Sep w="w-1" />
      <Snap name="solid" /><Snap name="bluecube" />
      <Sep w="w-[6px]" />
      <Snap name="endpt" on /><Snap name="midpt" on />
      <Snap name="curve" /><Snap name="cross" />
      <Snap name="center" on /><Snap name="quad" />
      <Snap name="exist" on /><Snap name="oncurve" on />
      <Snap name="onface" />
      <Sep w="w-2" />
      <Snap name="gridpt" />
    </div>
  );
}

function StatusLine() {
  return (
    <div className="flex shrink-0 h-[22px] border-t border-t-white border-b border-b-[#666] bg-linear-to-b from-[#dedede] to-[#d0d0d0]">
      <div className="w-[607px] shrink-0 border-r border-[#bbb]" />
      <div className="pl-1 font-bold leading-[18px]" role="status">体(2) 已选定</div>
    </div>
  );
}

function ResourceTab({ name, active, space }) {
  return (
    <button
      aria-label={name}
      className={clsx(
        'h-10 shrink-0 flex items-center justify-center rounded-l-sm border border-r-0 border-[#777]',
        active ? 'w-7 bg-[#f0f0f0]' : 'w-[26px] bg-linear-to-b from-[#dcdcdc] to-[#c0c0c0]',
        space,
      )}
    >
      <Icon name={name} className="w-[22px] h-[22px]" />
    </button>
  );
}

function ResourceBar() {
  return (
    <div className="w-[33px] shrink-0 flex flex-col items-end gap-[2px] pt-[17px] overflow-hidden bg-linear-to-r from-[#8d8d8d] to-[#b5b5b5]">
      <ResourceTab name="asm" />
      <ResourceTab name="mate" />
      <ResourceTab name="nav" active />
      <ResourceTab name="books" />
      <ResourceTab name="info" space="mt-3" />
      <ResourceTab name="web" space="mt-3" />
      <ResourceTab name="clock" space="mt-3" />
      <ResourceTab name="roles" />
      <ResourceTab name="spectrum" />
      <svg viewBox="0 0 26 8" className="w-[26px] h-2 shrink-0"><path d="M0 1h26v2q-5-1-10 3t-8 1-8-5z" fill="#d6d6d6" stroke="#777" /></svg>
      <div className="flex flex-col gap-[2px] mr-[7px]">
        {['M2 2h8M2 10l4-5 4 5z', 'M2 8l4-4 4 4z', 'M2 4h8L6 8z', 'M2 2h8L6 6zM2 9h8'].map((d, i) => (
          <button key={d} className="w-[15px] h-[14px] flex items-center justify-center bg-[#e4e4e4] border border-[#f4f4f4]" aria-label={`Scroll ${i + 1}`}>
            <svg viewBox="0 0 12 12" className="w-[11px] h-[11px]"><path d={d} fill={i < 2 ? '#aaa' : '#333'} stroke={i < 2 ? '#aaa' : '#333'} /></svg>
          </button>
        ))}
      </div>
    </div>
  );
}

const GROUPS = [
  { label: '摄像机', icons: ['tick', 'camera'] },
  { label: '图纸', icons: ['clock', 'sheets'] },
  { label: '用户表达式', icons: ['exprfolder'] },
  { label: '组', icons: ['folder'] },
  { label: '模型历史记录', icons: ['folder'], open: true },
];
const BODIES = Array.from({ length: 13 }, (_, i) => i);

function Expander({ open }) {
  return (
    <button className="w-[9px] h-[9px] shrink-0 border border-[#777] bg-white flex items-center justify-center" aria-expanded={!!open} aria-label="Toggle">
      <svg viewBox="0 0 5 5" className="w-[5px] h-[5px]"><path d={open ? 'M0 2.500h5' : 'M0 2.500h5M2.500 0v5'} stroke="#222" /></svg>
    </button>
  );
}

function Tree() {
  const [selected, setSelected] = useState(2);
  const row = 'h-5 border-b border-[#d4d4d4]';

  return (
    <table className="w-full table-fixed border-collapse text-[#222]">
      <colgroup><col className="w-[200px]" /><col /></colgroup>
      <tbody>
        {GROUPS.map((g, i) => (
          <tr key={g.label} className={clsx(row, i % 2 ? 'bg-[#f3f4f3]' : 'bg-white')}>
            <td className="p-0 border-r border-[#ddd]">
              <div className="h-[19px] pl-[5px] flex items-center whitespace-nowrap">
                <Expander open={g.open} />
                <span className="w-[6px] border-t border-dotted border-[#999]" />
                {g.icons.map(n => <Icon key={n} name={n} className="w-4 h-4" />)}
                <span className="pl-[2px] leading-[18px]">{g.label}</span>
              </div>
            </td>
            <td />
          </tr>
        ))}
        {BODIES.map(n => (
          <tr key={n} className={clsx(row, n % 2 ? 'bg-white' : 'bg-[#f3f4f3]')} onClick={() => setSelected(n)}>
            <td className={clsx('p-0 border-r border-[#ddd]', n === selected && 'text-white')}>
              <div className="h-[19px] pl-[29px] flex items-center whitespace-nowrap">
                <span className="self-stretch border-l border-dotted border-[#999]" />
                <span className="w-[11px] border-t border-dotted border-[#999]" />
                <span className="relative w-3 h-3 shrink-0 flex">
                  <input id={`body-${n}`} type="checkbox" defaultChecked className="peer w-3 h-3 appearance-none border border-black bg-white" />
                  <svg viewBox="0 0 24 24" className="absolute inset-[1px] w-[10px] h-[10px] pointer-events-none invisible peer-checked:visible">{ICONS.tick}</svg>
                </span>
                <Icon name="body" className="w-4 h-4 mx-[2px]" />
                <label htmlFor={`body-${n}`} className={clsx('flex-1 self-stretch leading-[18px]', n === selected && 'bg-[#3399ff]')}>
                  {`体 (${n})`}
                </label>
              </div>
            </td>
            <td className={clsx(n === selected && 'bg-[#3399ff]')} />
          </tr>
        ))}
      </tbody>
    </table>
  );
}

function Navigator() {
  return (
    <aside className="w-[325px] shrink-0 min-h-0 flex flex-col pl-[9px] pr-[11px] pb-[6px] bg-[#ececec] border-r border-[#888]">
      <h2 className="h-[31px] shrink-0 flex items-center gap-3 pl-1 font-bold">
        <Icon name="pin" className="w-[14px] h-[14px]" />部件导航器
      </h2>
      <div className="flex-1 min-h-0 flex flex-col border border-[#555] bg-white">
        <div className="h-5 shrink-0 flex items-center bg-linear-to-b from-[#f4f4f4] to-[#d0d0d0] border-b border-[#888]">
          <div className="w-[201px] h-full flex items-center gap-4 pl-[6px] border-r border-[#aaa]">
            名称
            <svg viewBox="0 0 10 5" className="w-[10px] h-[5px]"><path d="M0 5h10L5 0z" /></svg>
          </div>
          <div className="pl-[6px]">附注</div>
        </div>
        <div className="flex-1 min-h-0 flex">
          <div className="flex-1 min-h-0 overflow-hidden"><Tree /></div>
          <div className="w-4 shrink-0 flex flex-col items-center bg-[#efefef] pt-[8px] pb-[6px]">
            <Caret className="rotate-180" />
            <div className="w-[14px] h-[15px] mt-2 border border-[#888] bg-linear-to-r from-[#fafafa] to-[#c0c0c0]" />
            <Caret className="mt-auto" />
          </div>
        </div>
        <div className="h-[17px] shrink-0 flex items-center pl-2 pr-6 bg-[#efefef]">
          <Caret className="rotate-90" />
          <div className="h-[15px] flex-1 ml-[6px] mr-[22px] flex items-center justify-center gap-[2px] border border-[#888] bg-linear-to-b from-[#f2f2f2] to-[#bdbdbd]">
            {[0, 1, 2].map(i => <span key={i} className="w-px h-[6px] bg-[#444]" />)}
          </div>
          <Caret className="-rotate-90" />
        </div>
      </div>
      <div className="h-[13px] shrink-0 flex items-center justify-center"><div className="w-[53px] h-[6px] bg-[#ccc] border border-t-white border-[#999]" /></div>
      {['相依性', '细节', '预览'].map(t => (
        <button key={t} className="h-[23px] shrink-0 flex items-center justify-between pl-[6px] font-bold border-b border-r border-[#999] bg-linear-to-b from-[#f4f4f4] to-[#cfcfcf]">
          {t}
          <span className="h-full w-[22px] flex items-center justify-center border-l border-[#aaa]">
            <svg viewBox="0 0 12 10" className="w-3 h-[10px]"><path d="M1 0l5 8 5-8" fill="none" stroke="#444" strokeWidth="2.500" /></svg>
          </span>
        </button>
      ))}
    </aside>
  );
}

function Screw({ x, y }) {
  return (
    <g transform={`translate(${x} ${y})`} stroke="#000">
      <ellipse rx="12" ry="8" fill="#138a1c" strokeWidth="1.500" />
      <ellipse rx="9" ry="5.500" fill="#22d82c" strokeWidth=".6" />
      <ellipse rx="5" ry="3.500" fill="#116a16" strokeWidth="1" />
      <path d="M-3 0l3-2 3 1-1 3z" fill="#1ba524" stroke="none" />
    </g>
  );
}

function Viewport() {
  return (
    <main className="flex-1 min-w-0 bg-black overflow-hidden">
      <svg viewBox="361 283 599 507" preserveAspectRatio="xMidYMid meet" className="w-full h-full" role="img" aria-label="Mold base model">
        <g stroke="#000" strokeWidth="1.500" strokeLinejoin="round">
          {/* base plate */}
          <path d="M423 631l14-12 394-29 18 10-201 155z" fill="#fff" />
          <path d="M423 631l225 124v18L423 648z" fill="#a0a0a0" />
          <path d="M648 755l201-155 1 18-202 155z" fill="#bebebe" />
          <path d="M639 748l9 5 8-6M642 746l6 3 5-4" fill="none" />
          {/* ejector space between the spacers */}
          <path d="M473 598l118 64 3 62-117-63z" fill="#111" />
          <path d="M474 600l18 10v12l-16 10z" fill="#ccc" />
          <path d="M477 630l15-11v-17l98 50v41z" fill="#fff" />
          <path d="M477 631l113 62v12l-113-63z" fill="#80878e" />
          <path d="M477 643l113 62v15l-113-61z" fill="#948088" />
          <path d="M478 661l115 62" stroke="#fff" />
          <path d="M492 607h28v20q-14 10-28 0z" fill="#1a1c78" />
          <path d="M492 612q14 7 28 0M492 617q14 7 28 0M492 622q14 7 28 0M492 627q14 7 28 0" fill="none" stroke="#5358d0" strokeWidth="1" />
          <path d="M575 652h15v27q-9 0-15-6z" fill="#1a1c78" />
          <path d="M575 661q8 5 15 4M575 666q8 5 15 4M575 671q8 5 15 4" fill="none" stroke="#5358d0" strokeWidth="1" />
          <ellipse cx="490" cy="630" rx="4" ry="3" fill="#2a30b8" />
          <ellipse cx="587" cy="685" rx="4" ry="3" fill="#2a30b8" />
          {/* spacer blocks */}
          <path d="M438 581l35 19 4 60-37-20z" fill="#a2a2a2" />
          <path d="M590 664l37 19 2 60-36-20z" fill="#a2a2a2" />
          <path d="M627 683l200-154 4 61-202 153z" fill="#c0c0c0" />
          {/* cavity plates */}
          <path d="M435 527l187 102 5 54-189-102z" fill="#9b5654" />
          <path d="M622 629l202-152 3 52-200 154z" fill="#c96a68" />
          <path d="M432 478l188 106 2 45-187-102z" fill="#5d82a6" />
          <path d="M620 584l203-136 1 29-202 152z" fill="#70a0cc" />
          <ellipse cx="739" cy="576" rx="4.500" ry="6" fill="#7a7c78" transform="rotate(15 739 576)" />
          <ellipse cx="712" cy="597" rx="4.500" ry="6" fill="#7a7c78" transform="rotate(15 712 597)" />
          <path d="M517 557l19 9 1 26-18-10z" fill="#636363" />
          <path d="M516 580l3 1 18 10 4 3v4l-25-14z" fill="#f6c4c4" />
          {/* top clamping plate */}
          <path d="M412 450l226 124v20L412 468z" fill="#9d9d9d" />
          <path d="M638 574l201-153 1 19-202 154z" fill="#bdbdbd" />
          <path d="M613 295l226 126-201 153-226-124z" fill="#fff" />
        </g>
        <Screw x="601.500" y="352" />
        <Screw x="497.500" y="433" />
        <Screw x="753" y="437" />
        <Screw x="648" y="517" />
        {/* locating ring */}
        <g stroke="#000" strokeWidth="1.800">
          <path d="M598 408v8a51 33 0 0 0 102 0v-8z" fill="#0a6650" />
          <ellipse cx="649" cy="409" rx="51" ry="33" fill="#0fb795" />
          <clipPath id="bore"><ellipse cx="649" cy="409" rx="36" ry="23" /></clipPath>
          <g clipPath="url(#bore)">
            <path d="M610 380h80v60h-80z" fill="#075c46" />
            <ellipse cx="649" cy="420" rx="36" ry="24" fill="#fff" />
            <ellipse cx="650" cy="430" rx="22" ry="14" fill="#a6d83a" />
            <ellipse cx="650" cy="432" rx="9" ry="6" fill="#c6e86a" strokeWidth="1" />
            <ellipse cx="638" cy="425" rx="4" ry="2.500" fill="#111" />
          </g>
          <ellipse cx="649" cy="409" rx="36" ry="23" fill="none" />
          <ellipse cx="617" cy="391" rx="5" ry="4" fill="#111" />
          <ellipse cx="681" cy="427" rx="5" ry="4" fill="#111" />
        </g>
        {/* work coordinate system */}
        <path d="M625 467h5l-1 30z" fill="#3848a0" />
        <path d="M632 498l26-19 6-6-8 11z" fill="#8fc8a0" />
        <path d="M632 502l20 6 18 15-20-7z" fill="#c08084" />
        <path d="M633 449l8 9" stroke="#2036c0" strokeWidth="2" />
        <text x="647" y="467" fontSize="13" fill="#2c8c44" fontFamily="Liberation Sans, sans-serif">YC</text>
        <text x="654" y="536" fontSize="13" fill="#b02c34" fontFamily="Liberation Sans, sans-serif">XC</text>
        <g fill="none" stroke="#f5a04a" strokeLinejoin="round" strokeLinecap="round">
          <path d="M642 452q6-4 13 0l40 21q6 4 1 10-2 4-8 6-4 5-10 7-4 2-8 9l-52 39q-6 5-13 1l-41-20q-7-4 0-11z" strokeWidth="9" />
          <ellipse cx="652" cy="477" rx="10.500" ry="7" strokeWidth="4" />
        </g>
        {/* view triad */}
        <path d="M407 726l11-7 14 8v14l-12 8-13-7z" fill="#c0c6c0" />
        <path d="M407 726l13 8 12-7M420 734v15" fill="none" stroke="#e4e8e4" />
        <path d="M405 742l22-16" stroke="#6a9c6a" />
        <path d="M405 742v-21" stroke="#2450c0" strokeWidth="3" />
        <path d="M405 742l24 13" stroke="#c02c30" strokeWidth="3" />
        <circle cx="405" cy="742" r="4" fill="#e4e4e4" />
        <g fontSize="10" fontFamily="Liberation Sans, sans-serif">
          <text x="401" y="720" fill="#2c5ce8">Z</text>
          <text x="427" y="727" fill="#3c8c4c">Y</text>
          <text x="429" y="761" fill="#d8383c">X</text>
        </g>
      </svg>
    </main>
  );
}

function SketchBar() {
  return (
    <footer className="shrink-0 border-b-8 border-[#161616]">
      <div className="h-[35px] flex items-center overflow-hidden pl-[150px] border-t border-white bg-linear-to-b from-[#e2e2e2] to-[#cdd0ce]">
        <Sep w="w-[2px]" /><Grip w="w-[6px]" />
        <Tool name="sketch" />
        <button disabled className="w-[83px] shrink-0 flex items-center gap-1 pl-1 whitespace-nowrap text-[#8d8f8e]">
          <Icon name="finish" />完成草图
        </button>
        <Tool name="profile" /><Tool name="line" /><Tool name="arc" /><Tool name="circle" />
        <Tool name="fillet" /><Tool name="chamfer" /><Tool name="rect" /><Tool name="spline" />
        <Tool name="point" /><Tool name="offcurve" /><Drop />
        <Sep />
        <Tool name="qtrim" /><Tool name="qext" />
        <Sep />
        <Tool name="dim" /><Drop />
        <Sep />
        <Tool name="constr" /><Tool name="autoc" /><Drop w="w-[10px]" /><LowDrop />
        <Sep w="w-1" />
      </div>
    </footer>
  );
}

export default function App() {
  return (
    <div className="h-screen flex flex-col overflow-hidden border-l-[3px] border-black bg-[#d4d4d4] text-xs text-black font-['Noto_Sans_CJK_SC',sans-serif]">
      <MenuBar />
      <StandardBar />
      <FeatureBar />
      <UtilityBar />
      <RenderBar />
      <SelectionBar />
      <StatusLine />
      <div className="flex-1 min-h-0 flex">
        <ResourceBar />
        <Navigator />
        <Viewport />
      </div>
      <SketchBar />
    </div>
  );
}
